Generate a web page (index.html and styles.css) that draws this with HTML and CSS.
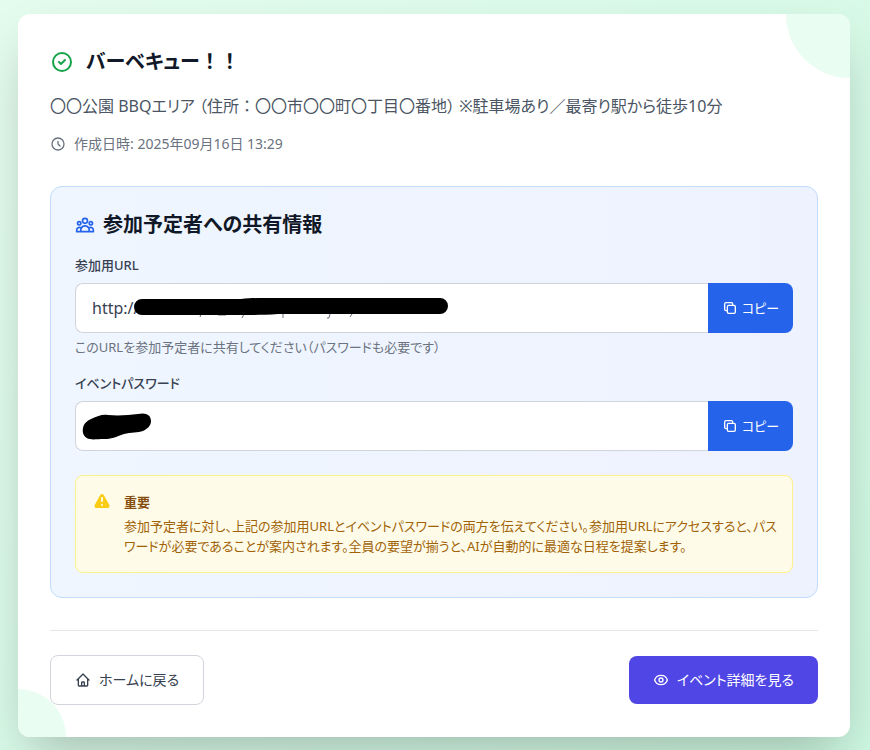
FILE: index.html
```
<!DOCTYPE html>
<html lang="ja">
<head>
    <meta charset="UTF-8">
    <meta name="viewport" content="width=device-width, initial-scale=1.0">
    <title>バーベキュー！！</title>
    <link rel="stylesheet" href="styles.css">
</head>
<body>
    <main class="card">
        <div class="circle circle-top"></div>
        <div class="circle circle-bottom"></div>

        <!-- イベント概要 -->
        <header class="event-header">
            <div class="event-title">
                <svg class="icon icon-lg" viewBox="0 0 24 24"><path d="M9 12l2 2 4-4m6 2a9 9 0 11-18 0 9 9 0 0118 0z"/></svg>
                <h1>バーベキュー<span class="full">！！</span></h1>
            </div>
            <p class="event-place">〇〇公園 BBQエリア （住所<span class="full">：</span>〇〇市〇〇町〇丁目〇番地） ※駐車場あり／最寄り駅から徒歩10分</p>
            <p class="event-date">
                <svg class="icon" viewBox="0 0 24 24"><path d="M12 8v4l3 3m6-3a9 9 0 11-18 0 9 9 0 0118 0z"/></svg>
                <span>作成日時: 2025年09月16日 13:29</span>
            </p>
        </header>

        <!-- 共有情報 -->
        <section class="share">
            <h2>
                <svg class="icon icon-md" viewBox="0 0 24 24"><path d="M17 20h5v-2a3 3 0 00-5.356-1.857M17 20H7m10 0v-2c0-.656-.126-1.283-.356-1.857M7 20H2v-2a3 3 0 015.356-1.857M7 20v-2c0-.656.126-1.283.356-1.857m0 0a5.002 5.002 0 019.288 0M15 7a3 3 0 11-6 0 3 3 0 016 0zm6 3a2 2 0 11-4 0 2 2 0 014 0zM7 10a2 2 0 11-4 0 2 2 0 014 0z"/></svg>
                <span>参加予定者への共有情報</span>
            </h2>

            <div class="field">
                <label for="join-url">参加用URL</label>
                <div class="copy-group">
                    <input type="text" id="join-url" value="http://" readonly>
                    <svg class="mask mask-url" viewBox="0 0 316 22" width="316" height="22">
                        <path class="remnant" d="M68 17l-1 3M85 18h8M111 17l-2 4M150 16v5M197 17l-1 4h-2M219 17l-2 3"/>
                        <path d="M9 2H108C118 1 126 1 136 1H307A8 8 0 01307 17H145C132 18 120 18 108 18H9A8 8 0 019 2Z"/>
                    </svg>
                    <button type="button">
                        <svg class="icon" viewBox="0 0 24 24"><path d="M8 16H6a2 2 0 01-2-2V6a2 2 0 012-2h8a2 2 0 012 2v2m-6 12h8a2 2 0 002-2v-8a2 2 0 00-2-2h-8a2 2 0 00-2 2v8a2 2 0 002 2z"/></svg>
                        コピー
                    </button>
                </div>
                <p class="hint">このURLを参加予定者に共有してください（パスワードも必要です）</p>
            </div>

            <div class="field">
                <label for="event-password">イベントパスワード</label>
                <div class="copy-group">
                    <input type="text" id="event-password" readonly>
                    <svg class="mask mask-password" viewBox="0 0 70 28" width="70" height="28">
                        <path d="M9 6C16 3 20 1 26 2C37 3 47 2 56 1C64 -1 69 2 69 8C69 13 65 16 61 18C56 20 49 19 42 21C34 24 29 26 22 26C16 26 11 27 8 26C2 25 0 20 1 15C2 10 5 8 9 6Z"/>
                    </svg>
                    <button type="button">
                        <svg class="icon" viewBox="0 0 24 24"><path d="M8 16H6a2 2 0 01-2-2V6a2 2 0 012-2h8a2 2 0 012 2v2m-6 12h8a2 2 0 002-2v-8a2 2 0 00-2-2h-8a2 2 0 00-2 2v8a2 2 0 002 2z"/></svg>
                        コピー
                    </button>
                </div>
            </div>

            <div class="notice">
                <svg class="notice-icon" viewBox="0 0 20 20"><path fill-rule="evenodd" d="M8.257 3.099c.765-1.36 2.722-1.36 3.486 0l5.58 9.92c.75 1.334-.213 2.98-1.742 2.98H4.42c-1.53 0-2.493-1.646-1.743-2.98l5.58-9.92zM11 13a1 1 0 11-2 0 1 1 0 012 0zm-1-8a1 1 0 00-1 1v3a1 1 0 002 0V6a1 1 0 00-1-1z"/></svg>
                <div>
                    <h3>重要</h3>
                    <p>参加予定者に対し、上記の参加用URLとイベントパスワードの両方を伝えてください。参加用URLにアクセスすると、パスワードが必要であることが案内されます。全員の要望が揃うと、AIが自動的に最適な日程を提案します。</p>
                </div>
            </div>
        </section>

        <!-- ナビゲーション -->
        <nav class="actions">
            <a href="#" class="btn btn-outline">
                <svg class="icon" viewBox="0 0 24 24"><path d="M3 12l2-2m0 0l7-7 7 7M5 10v10a1 1 0 001 1h3m10-11l2 2m-2-2v10a1 1 0 01-1 1h-3m-6 0a1 1 0 001-1v-4a1 1 0 011-1h2a1 1 0 011 1v4a1 1 0 001 1m-6 0h6"/></svg>
                ホームに戻る
            </a>
            <a href="#" class="btn btn-primary">
                <svg class="icon" viewBox="0 0 24 24"><path d="M15 12a3 3 0 11-6 0 3 3 0 016 0z"/><path d="M2.458 12C3.732 7.943 7.523 5 12 5c4.478 0 8.268 2.943 9.542 7-1.274 4.057-5.064 7-9.542 7-4.477 0-8.268-2.943-9.542-7z"/></svg>
                イベント詳細を見る
            </a>
        </nav>
    </main>
</body>
</html>
```
FILE: styles.css
```
* {
    box-sizing: border-box;
}
body {
    margin: 0;
    padding: 14px 20px 13px 18px;
    min-height: 100vh;
    font-family: "Noto Sans", "Noto Sans CJK JP", sans-serif;
    font-feature-settings: "palt";
    font-size: 16px;
    line-height: 24px;
    color: #374151;
    background: linear-gradient(135deg, #e4fcee, #ccf7e0);
}
h1, h2, h3, p {
    margin: 0;
}
.full {
    font-feature-settings: normal;
}
.card {
    position: relative;
    overflow: hidden;
    padding: 32px;
    background: white;
    border-radius: 12px;
    box-shadow: 0 25px 50px -12px rgba(0, 0, 0, 0.25);
}
.circle {
    position: absolute;
    border-radius: 50%;
    background: #e9fdf2;
}
.circle-top {
    top: -64px;
    right: -64px;
    width: 128px;
    height: 128px;
}
.circle-bottom {
    bottom: -48px;
    left: -48px;
    width: 96px;
    height: 96px;
}
.icon {
    flex: none;
    width: 16px;
    height: 16px;
    fill: none;
    stroke: currentColor;
    stroke-width: 2;
    stroke-linecap: round;
    stroke-linejoin: round;
}
.icon-md {
    width: 20px;
    height: 20px;
    color: #2563eb;
}
.icon-lg {
    width: 24px;
    height: 24px;
    color: #16a34a;
}

/* イベント概要 */
.event-header {
    position: relative;
    display: flex;
    flex-direction: column;
    gap: 16px;
    margin-bottom: 32px;
}
.event-title {
    display: flex;
    align-items: center;
    gap: 12px;
}
h1 {
    font-size: 20px;
    line-height: 32px;
    font-weight: 700;
    color: #111827;
}
.event-place {
    color: #4b5563;
}
.event-date {
    display: flex;
    align-items: center;
    gap: 8px;
    font-size: 14px;
    line-height: 20px;
    color: #6b7280;
}

/* 共有情報 */
.share {
    position: relative;
    padding: 24px;
    border: 1px solid #bfdbfe;
    border-radius: 12px;
    background: linear-gradient(90deg, #eff6ff, #eef2ff);
}
h2 {
    display: flex;
    align-items: center;
    gap: 8px;
    margin-bottom: 16px;
    font-size: 20px;
    line-height: 28px;
    font-weight: 600;
    color: #111827;
}
.field {
    margin-bottom: 16px;
}
.field label {
    display: block;
    margin-bottom: 8px;
    font-size: 13px;
    line-height: 20px;
    font-weight: 500;
}
.copy-group {
    position: relative;
    display: flex;
    height: 50px;
}
.copy-group input {
    flex: 1;
    min-width: 0;
    padding: 0 16px;
    border: 1px solid #d1d5db;
    border-right: none;
    border-radius: 8px 0 0 8px;
    background: white;
    font: inherit;
    color: #374151;
}
.copy-group button {
    display: flex;
    align-items: center;
    justify-content: center;
    gap: 4px;
    width: 85px;
    padding: 0;
    border: none;
    border-radius: 0 8px 8px 0;
    background: #2563eb;
    color: white;
    font: inherit;
    font-size: 13px;
    font-feature-settings: "palt";
    cursor: pointer;
}
.copy-group button:hover {
    background: #1d4ed8;
}
.mask {
    position: absolute;
    fill: #000;
}
.mask-url {
    top: 14px;
    left: 58px;
}
.mask-password {
    top: 12px;
    left: 7px;
}
.remnant {
    fill: none;
    stroke: #6b7280;
}
.hint {
    margin-top: 4px;
    font-size: 13px;
    line-height: 20px;
    color: #6b7280;
}
.notice {
    display: flex;
    gap: 12px;
    margin-top: 24px;
    padding: 16px 12px 16px 16px;
    border: 1px solid #fef08a;
    border-radius: 8px;
    background: #fefce8;
    font-size: 13px;
    line-height: 20px;
    color: #a16207;
}
.notice-icon {
    flex: none;
    width: 20px;
    height: 20px;
    fill: #facc15;
}
h3 {
    margin-bottom: 4px;
    font-size: 13px;
    line-height: 20px;
    font-weight: 600;
    color: #854d0e;
}

/* ナビゲーション */
.actions {
    position: relative;
    display: flex;
    align-items: center;
    justify-content: space-between;
    margin-top: 32px;
    padding-top: 24px;
    border-top: 1px solid #e5e7eb;
}
.btn {
    display: flex;
    align-items: center;
    gap: 8px;
    padding: 12px 24px;
    border-radius: 8px;
    font-size: 14px;
    text-decoration: none;
}
.btn-outline {
    border: 1px solid #d1d5db;
    background: white;
    color: #374151;
}
.btn-primary {
    background: #4f46e5;
    color: white;
}
```
